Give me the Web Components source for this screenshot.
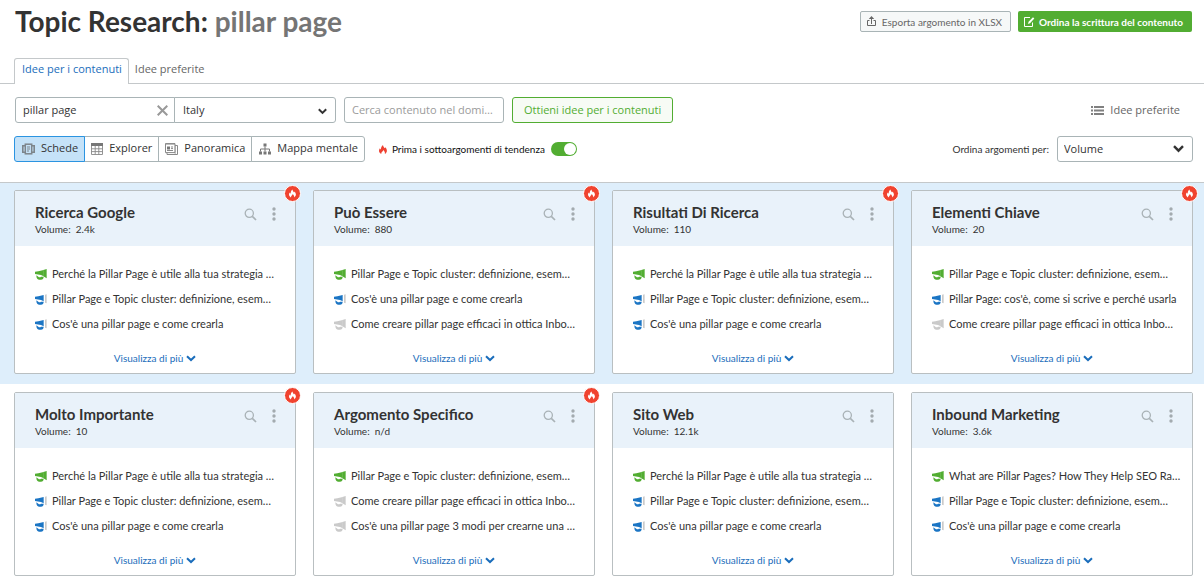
<!DOCTYPE html>
<html lang="it">
<head>
<meta charset="utf-8">
<meta name="viewport" content="width=device-width, initial-scale=1">
<title>Topic Research: pillar page</title>
<style>
  body {
    margin: 0;
    background: #fff;
    color: #333;
    font: 11px/16px Lato, "Open Sans", sans-serif;
    --line: #c4c8ca;
    --edge: #a9b4b6;
    --link: #1a6dbb;
    --green: #52ad32;
    --grey: #666;
    --control: 11px/16px "Open Sans", sans-serif;
  }
</style>
</head>
<body>
<topic-app></topic-app>

<template id="tpl-app">
  <style>
    :host { display: block; }
    .band { padding: 8px 11px 10px 14px; }
    .band.hot { background: #deeefb; border-top: 1px solid var(--line); padding-top: 7px; }
    .grid { display: grid; grid-template-columns: repeat(4, minmax(0, 1fr)); gap: 17px; }
  </style>
  <page-header topic="pillar page"></page-header>
  <page-tabs></page-tabs>
  <search-bar></search-bar>
  <view-bar></view-bar>
  <main>
    <section class="band hot"><div class="grid">
      <topic-card name="Ricerca Google" volume="2.4k" trending>
        <idea-item tone="green">Perché la Pillar Page è utile alla tua strategia …</idea-item>
        <idea-item tone="blue">Pillar Page e Topic cluster: definizione, esem…</idea-item>
        <idea-item tone="blue">Cos'è una pillar page e come crearla</idea-item>
      </topic-card>
      <topic-card name="Può Essere" volume="880" trending>
        <idea-item tone="green">Pillar Page e Topic cluster: definizione, esem…</idea-item>
        <idea-item tone="blue">Cos'è una pillar page e come crearla</idea-item>
        <idea-item tone="grey">Come creare pillar page efficaci in ottica Inbo…</idea-item>
      </topic-card>
      <topic-card name="Risultati Di Ricerca" volume="110" trending>
        <idea-item tone="green">Perché la Pillar Page è utile alla tua strategia …</idea-item>
        <idea-item tone="blue">Pillar Page e Topic cluster: definizione, esem…</idea-item>
        <idea-item tone="blue">Cos'è una pillar page e come crearla</idea-item>
      </topic-card>
      <topic-card name="Elementi Chiave" volume="20" trending>
        <idea-item tone="green">Pillar Page e Topic cluster: definizione, esem…</idea-item>
        <idea-item tone="blue">Pillar Page: cos'è, come si scrive e perché usarla</idea-item>
        <idea-item tone="grey">Come creare pillar page efficaci in ottica Inbo…</idea-item>
      </topic-card>
    </div></section>
    <section class="band"><div class="grid">
      <topic-card name="Molto Importante" volume="10" trending>
        <idea-item tone="green">Perché la Pillar Page è utile alla tua strategia …</idea-item>
        <idea-item tone="blue">Pillar Page e Topic cluster: definizione, esem…</idea-item>
        <idea-item tone="blue">Cos'è una pillar page e come crearla</idea-item>
      </topic-card>
      <topic-card name="Argomento Specifico" volume="n/d" trending>
        <idea-item tone="green">Pillar Page e Topic cluster: definizione, esem…</idea-item>
        <idea-item tone="grey">Come creare pillar page efficaci in ottica Inbo…</idea-item>
        <idea-item tone="grey">Cos'è una pillar page 3 modi per crearne una …</idea-item>
      </topic-card>
      <topic-card name="Sito Web" volume="12.1k">
        <idea-item tone="green">Perché la Pillar Page è utile alla tua strategia …</idea-item>
        <idea-item tone="blue">Pillar Page e Topic cluster: definizione, esem…</idea-item>
        <idea-item tone="blue">Cos'è una pillar page e come crearla</idea-item>
      </topic-card>
      <topic-card name="Inbound Marketing" volume="3.6k">
        <idea-item tone="green">What are Pillar Pages? How They Help SEO Ra…</idea-item>
        <idea-item tone="blue">Pillar Page e Topic cluster: definizione, esem…</idea-item>
        <idea-item tone="blue">Cos'è una pillar page e come crearla</idea-item>
      </topic-card>
    </div></section>
  </main>
</template>

<template id="tpl-header">
  <style>
    :host { display: flex; justify-content: space-between; align-items: flex-start; padding: 3px 12px 0 15px; height: 54px; box-sizing: border-box; }
    h1 { margin: 0; font-size: 28px; line-height: 36px; font-weight: 700; white-space: nowrap; }
    h1 span { color: #757575; }
    .actions { display: flex; gap: 7px; padding-top: 8px; }
    button { display: flex; align-items: center; box-sizing: border-box; height: 21px; border-radius: 2px; font: 10px/16px Lato, sans-serif; white-space: nowrap; }
    .export { gap: 6px; padding: 0 8px 0 6px; color: var(--grey); background: #f6f8f8; border: 1px solid var(--edge); }
    .order { gap: 4px; padding: 0 9px 0 6px; color: #fff; background: var(--green); border: 0; font-weight: 700; }
  </style>
  <h1>Topic Research: <span></span></h1>
  <div class="actions">
    <button class="export" type="button">
      <svg width="9" height="11" viewBox="0 0 9 11" fill="none" stroke="#666"><path d="M2.500 4.500h-2v5h8v-5h-2M4.500 8V2"/><path d="M4.500 0L7.200 3H1.800z" fill="#666" stroke="none"/></svg>
      Esporta argomento in XLSX
    </button>
    <button class="order" type="button">
      <svg width="11" height="11" viewBox="0 0 11 11" fill="none" stroke="#fff"><path d="M6 1.500H.5v9h8V6.500"/><path d="M4 8l.6-2.300L9 1.300l1.300 1.300L6 7.200z" fill="#fff" stroke="none"/></svg>
      Ordina la scrittura del contenuto
    </button>
  </div>
</template>

<template id="tpl-tabs">
  <style>
    :host { display: block; padding: 4px 14px 0; border-bottom: 1px solid var(--line); }
    nav { display: flex; }
    a { box-sizing: border-box; height: 25px; padding: 3px 6px 0; font: var(--control); color: var(--grey); text-decoration: none; white-space: nowrap; }
    a[aria-current] { height: 26px; margin-bottom: -1px; padding: 2px 6px 0 7px; color: var(--link); background: #fff; border: 1px solid var(--line); border-bottom: 0; border-radius: 3px 3px 0 0; }
  </style>
  <nav><a href="#idee" aria-current="page">Idee per i contenuti</a><a href="#preferite">Idee preferite</a></nav>
</template>

<template id="tpl-search">
  <style>
    :host { display: flex; align-items: center; gap: 8px; padding: 13px 24px 0 15px; }
    .joined { display: flex; }
    .box { display: grid; align-items: center; box-sizing: border-box; height: 26px; border: 1px solid var(--edge); border-radius: 3px; background: #fff; }
    .box > * { grid-area: 1 / 1; }
    .joined .box:first-child { width: 160px; border-radius: 3px 0 0 3px; }
    .joined .box:last-child { width: 162px; margin-left: -1px; border-radius: 0 3px 3px 0; }
    .domain { width: 160px; }
    input, select { box-sizing: border-box; width: 100%; height: 24px; padding: 0 7px; border: 0; background: none; color: #333; font: var(--control); appearance: none; outline: none; }
    input { padding-bottom: 2px; }
    select { padding-left: 8px; }
    input::placeholder { color: #9b9b9b; opacity: 1; }
    svg { display: block; }
    .clear { justify-self: end; margin-right: 6px; padding: 0; border: 0; background: none; }
    .chev { justify-self: end; margin: 3px 8px 0 0; pointer-events: none; }
    .go { box-sizing: border-box; height: 26px; padding: 0 11px; border: 1px solid var(--green); border-radius: 3px; background: #f7fbf5; color: var(--green); font: var(--control); white-space: nowrap; }
    a { display: flex; align-items: center; gap: 6px; margin-left: auto; color: var(--grey); font: var(--control); text-decoration: none; white-space: nowrap; }
  </style>
  <div class="joined">
    <div class="box"><input type="text" aria-label="Argomento" value="pillar page"><button class="clear" type="button" aria-label="Cancella"><svg width="11" height="11" viewBox="0 0 11 11" stroke="#999" stroke-width="2"><path d="M.7.7l9.600 9.600M10.300.7L.7 10.300"/></svg></button></div>
    <div class="box"><select aria-label="Paese"><option>Italy</option></select><svg class="chev" width="9" height="7" viewBox="0 0 9 7" fill="none" stroke="#333" stroke-width="2"><path d="M.8 1.200l3.700 3.700 3.700-3.700"/></svg></div>
  </div>
  <div class="box domain"><input type="text" aria-label="Dominio" placeholder="Cerca contenuto nel domi…"></div>
  <button class="go" type="button">Ottieni idee per i contenuti</button>
  <a href="#preferite"><svg width="13" height="9" viewBox="0 0 13 9" fill="#808080"><path d="M0 0h2v2H0zM3 0h10v2H3zM0 3.500h2v2H0zM3 3.500h10v2H3zM0 7h2v2H0zM3 7h10v2H3z"/></svg>Idee preferite</a>
</template>

<template id="tpl-view">
  <style>
    :host { display: flex; align-items: center; padding: 13px 11px 20px 14px; }
    .group { display: flex; }
    .group button { display: flex; align-items: center; gap: 6px; box-sizing: border-box; height: 26px; margin-left: -1px; padding: 0 6px 2px; border: 1px solid var(--edge); background: #fff; color: #333; font: var(--control); white-space: nowrap; }
    .group button:first-child { position: relative; margin-left: 0; padding-left: 7px; border-color: #2b94e1; border-radius: 3px 0 0 3px; background: #c5e2f8; }
    .group button:last-child { padding-left: 7px; border-radius: 0 3px 3px 0; }
    .group svg { padding-top: 1px; }
    label { display: flex; align-items: center; font: 10px/16px Lato, sans-serif; white-space: nowrap; }
    .trend { margin-left: 14px; color: #111; }
    .trend input { box-sizing: border-box; width: 26px; height: 14px; margin: 0 0 0 6px; padding: 1px; border-radius: 7px; appearance: none; background: #bbb; display: flex; }
    .trend input::before { content: ""; width: 12px; height: 12px; border-radius: 50%; background: #fff; }
    .trend input:checked { background: var(--green); justify-content: flex-end; }
    .sort { margin-left: auto; gap: 8px; }
    .box { display: grid; align-items: center; box-sizing: border-box; width: 136px; height: 26px; border: 1px solid var(--edge); border-radius: 3px; }
    .box > * { grid-area: 1 / 1; }
    select { box-sizing: border-box; width: 100%; height: 24px; padding: 0 6px; border: 0; background: none; color: #333; font: var(--control); appearance: none; outline: none; }
    .chev { justify-self: end; margin-right: 8px; pointer-events: none; }
  </style>
  <div class="group" role="group" aria-label="Vista">
    <button type="button" aria-pressed="true"><svg width="13" height="12" viewBox="0 0 13 11" fill="none" stroke="#7d858b"><path d="M3 2.300H.8v6.500H3M10 2.300h2.200v6.500H10" stroke-width="1.600"/><rect x="3.300" y=".7" width="6.400" height="9.600" stroke-width="1.500"/><path d="M5 3.500h3M5 5.500h3M5 7.500h2"/></svg>Schede</button>
    <button type="button"><svg width="12" height="12" viewBox="0 0 12 12"><path d="M0 0h12v3H0z" fill="#777"/><path d="M.5 3v8.500h11V3M.5 5.800h11M.5 8.600h11M4.200 3v8.500M7.800 3v8.500" fill="none" stroke="#888" stroke-width=".9"/></svg>Explorer</button>
    <button type="button"><svg width="13" height="12" viewBox="0 0 13 12" fill="none" stroke="#888"><path d="M.5.600h9.500v9H.5zM2 9.600v1.900h10.500v-9H10"/><path d="M10.200 2.500v9" stroke-width=".6"/><path d="M.5 1h9.500M2 7.500h6M6 4h2M6 5.600h2"/><path d="M2 3.500h3v3H2z" fill="#777" stroke="none"/></svg>Panoramica</button>
    <button type="button"><svg width="12" height="12" viewBox="0 0 12 11" fill="#777"><path d="M4.500 0h3v3h-3zM0 8h3v3H0zM4.500 8h3v3h-3zM9 8h3v3H9z"/><path d="M6 3v5M1.500 8V5.500h9V8" fill="none" stroke="#777"/></svg>Mappa mentale</button>
  </div>
  <label class="trend"><flame-icon></flame-icon>Prima i sottoargomenti di tendenza<input type="checkbox" role="switch" checked></label>
  <label class="sort">Ordina argomenti per:
    <span class="box"><select><option>Volume</option></select><svg class="chev" width="11" height="8" viewBox="0 0 11 8" fill="none" stroke="#333" stroke-width="2.400"><path d="M1 1.200l4.500 4.500L10 1.200"/></svg></span>
  </label>
</template>

<template id="tpl-flame">
  <style>
    :host { display: block; width: 8px; height: 9px; margin-right: 5px; color: #ee4131; }
    svg { display: block; width: 100%; height: 100%; }
  </style>
  <svg viewBox="0 0 16 18" fill="currentColor"><path d="M4.500 18C-.8 15-1 10 1.800 6.500c.3 1.500 1 2.200 2 2.700C3.800 5.500 5 2 8 0c.2 3 1.800 4.300 3.500 6.500.8-.5 1-1 1.200-1.900C17 9 17 15 11.500 18c1.300-3-.8-5-2.700-8C8 13 4 14 4.500 18z"/></svg>
</template>

<template id="tpl-card">
  <style>
    :host { display: block; position: relative; box-sizing: border-box; border: 1px solid #b9bfc1; border-radius: 2px; background: #fff; }
    header { display: flex; justify-content: space-between; align-items: flex-start; box-sizing: border-box; height: 55px; padding: 12px 19px 0 20px; background: #e9f2fa; }
    h2 { margin: 0; font-size: 15px; line-height: 19px; font-weight: 700; white-space: nowrap; }
    p { margin: 0; font-size: 10px; line-height: 15px; }
    .tools { display: flex; gap: 15px; padding-top: 4px; }
    .tools button { display: block; padding: 0; border: 0; background: none; }
    .tools svg { display: block; }
    ul { display: block; margin: 0; padding: 15px 0 0 20px; }
    footer { display: flex; justify-content: center; padding: 14px 0 6px; }
    footer a { display: flex; align-items: center; gap: 3px; color: var(--link); font-size: 10px; line-height: 17px; text-decoration: none; }
    .badge { display: none; position: absolute; top: -6px; right: -6px; width: 15px; height: 15px; border: 1px solid #fff; border-radius: 50%; background: #f0432f; place-items: center; }
    :host([trending]) .badge { display: grid; }
    .badge flame-icon { margin: 0; color: #fff; width: 7px; height: 9px; }
  </style>
  <header>
    <div><h2></h2><p>Volume:&nbsp; <span class="vol"></span></p></div>
    <div class="tools">
      <button type="button" aria-label="Cerca"><svg width="13" height="13" viewBox="0 0 13 13" fill="none" stroke="#a9b2b6"><circle cx="5.300" cy="5.300" r="4.100" stroke-width="1.300"/><path d="M8.300 8.300l3.700 3.700" stroke-width="1.700"/></svg></button>
      <button type="button" aria-label="Altro"><svg width="4" height="14" viewBox="0 0 4 14" fill="#a3abaf"><circle cx="2" cy="2" r="1.700"/><circle cx="2" cy="7" r="1.700"/><circle cx="2" cy="12" r="1.700"/></svg></button>
    </div>
  </header>
  <div role="list"><ul role="presentation"><slot></slot></ul></div>
  <footer><a href="#altro">Visualizza di più<svg width="10" height="7" viewBox="0 0 10 7" fill="none" stroke="#1a6dbb" stroke-width="2"><path d="M1 1.200l4 3.800 4-3.800"/></svg></a></footer>
  <span class="badge"><flame-icon></flame-icon></span>
</template>

<template id="tpl-idea">
  <style>
    :host { display: flex; align-items: center; gap: 5px; height: 25px; font-size: 11px; white-space: nowrap; --tone: #cacaca; --mouth: #cacaca; }
    :host([tone="green"]) { --tone: #52ad32; --mouth: #52ad32; }
    :host([tone="blue"]) { --tone: #1b75c4; }
    svg { display: block; flex: none; padding-top: 2px; }
  </style>
  <svg width="12" height="11" viewBox="0 0 36 33">
    <path d="M0 8l10-1 16-4v19l-8-4L0 15z" fill="var(--tone)"/>
    <path d="M4 19l6 4c2 2 6 2 8 0h8c0 6-3 9-8 9h-6c-5 0-8-4-8-13z" fill="var(--tone)"/>
    <path class="mouth" fill="var(--mouth)"/>
  </svg>
  <span><slot></slot></span>
</template>

<script>
  // Base element: clones its template into an open shadow root.
  class TemplateElement extends HTMLElement {
    constructor() {
      super();
      const tpl = document.getElementById(this.constructor.template);
      this.attachShadow({ mode: "open" }).append(tpl.content.cloneNode(true));
    }
    part$(selector) { return this.shadowRoot.querySelector(selector); }
  }

  class FlameIcon extends TemplateElement { static template = "tpl-flame"; }
  class PageTabs extends TemplateElement { static template = "tpl-tabs"; }
  class SearchBar extends TemplateElement { static template = "tpl-search"; }
  class ViewBar extends TemplateElement { static template = "tpl-view"; }
  class TopicApp extends TemplateElement { static template = "tpl-app"; }

  class PageHeader extends TemplateElement {
    static template = "tpl-header";
    connectedCallback() { this.part$("h1 span").textContent = this.getAttribute("topic"); }
  }

  class IdeaItem extends TemplateElement {
    static template = "tpl-idea";
    connectedCallback() {
      this.setAttribute("role", "listitem");
      // Blue ideas leave a gap between the horn and its mouth; the others are solid.
      const blue = this.getAttribute("tone") === "blue";
      this.part$(".mouth").setAttribute("d", blue ? "M30 2l5-1v27l-5-2z" : "M25 3l10-3v28l-10-6z");
    }
  }

  class TopicCard extends TemplateElement {
    static template = "tpl-card";
    connectedCallback() {
      this.part$("h2").textContent = this.getAttribute("name");
      this.part$(".vol").textContent = this.getAttribute("volume");
    }
  }

  customElements.define("flame-icon", FlameIcon);
  customElements.define("page-header", PageHeader);
  customElements.define("page-tabs", PageTabs);
  customElements.define("search-bar", SearchBar);
  customElements.define("view-bar", ViewBar);
  customElements.define("idea-item", IdeaItem);
  customElements.define("topic-card", TopicCard);
  customElements.define("topic-app", TopicApp);
</script>
</body>
</html>
